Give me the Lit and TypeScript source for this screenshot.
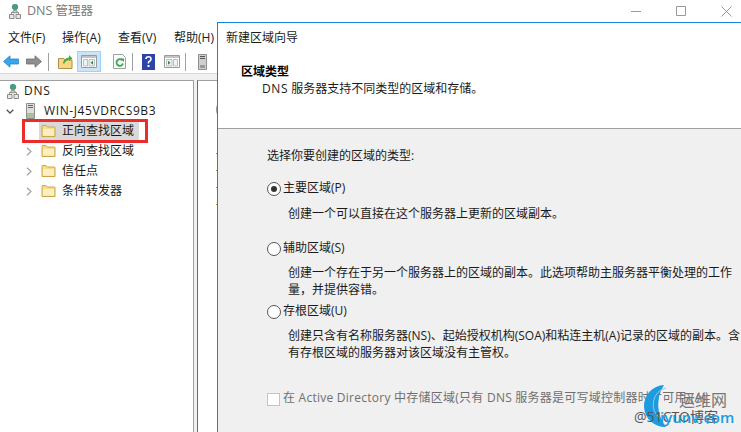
import { LitElement, html, css, svg } from "lit";
import { customElement } from "lit/decorators.js";

const folder = html`<svg class="folder" width="15" height="14" viewBox="0 0 15 14"><path d="M1 3.5V2.2Q1 1.5 1.7 1.5H5L6.5 3H13.5Q14 3 14 3.6V12.5H1Z" fill="#f8dc8c" stroke="#c9a64e"/><path d="M2 5H13V11.6H2Z" fill="#fdf0c0"/></svg>`;
const serverIcon = html`<svg width="9" height="16" viewBox="0 0 9 16"><path d="M.5 .5H8.500V15.500H.5Z" fill="#dcdcdc" stroke="#8f8f8f"/><path d="M2 2.500H7M2 4.500H7" stroke="#6a6a6a"/><path d="M1 10H8V15H1Z" fill="#a9bf9c"/></svg>`;
const dnsIcon = html`<svg width="12" height="15" viewBox="0 0 12 15"><circle cx="6" cy="3" r="2.800" fill="#49a35a" stroke="#3f84bb" stroke-width=".8"/><path d="M6 6V8.500M2.500 10V8.500H9.500V10" fill="none" stroke="#8c8c8c"/><path d="M4 6.800H8V8.800H4ZM.5 10.500H5V14.500H.5ZM7 10.500H11.500V14.500H7Z" fill="#e8e8e8" stroke="#8c8c8c"/></svg>`;

const panelIcon = (dir: string) => svg`<svg width="16" height="13" viewBox="0 0 16 13"><path d="M.5 .5H15.500V12.500H.5Z" fill="#fff" stroke="#9a9a9a"/><path d="M1 1H15V3H1Z" fill="#c4c4c4"/>${dir === "l"
    ? svg`<path d="M2.500 4.500H6.500V11H2.500ZM8 4.500H13.500V11H8Z" fill="#eef3f5" stroke="#a6a6a6" stroke-width=".7"/><path d="M12 5.800V9.800L9.500 7.800Z" fill="#2c8f3a"/>`
    : svg`<path d="M2.500 4.500H8V11H2.500ZM9.500 4.500H13.500V11H9.500Z" fill="#eef3f5" stroke="#a6a6a6" stroke-width=".7"/><path d="M4 5.800V9.800L6.500 7.800Z" fill="#2c8f3a"/>`}</svg>`;

@customElement("app-root")
export class AppRoot extends LitElement {
  static styles = css`
    :host { display: block; position: relative; width: 741px; height: 432px; overflow: hidden; background: #fff;
      font: 12px/16px "Open Sans", "Noto Sans CJK SC", sans-serif; color: #1a1a1a; }
    svg { display: block; flex: none; }
    .titlebar { height: 22px; display: flex; align-items: center; gap: 6px; padding: 0 0 0 9px; box-sizing: border-box; color: #7a7a7a; font-size: 12.5px; }
    .controls { margin-left: auto; display: flex; align-items: center; gap: 35px; padding-right: 9px; }
    .menu { height: 28px; display: flex; align-items: center; padding: 4px 0 0 8px; box-sizing: border-box; }
    .menu span { width: 56px; flex: none; }
    .menu span:first-child { width: 54px; }
    .toolbar { height: 23px; display: flex; align-items: center; padding-left: 3px; box-sizing: border-box; }
    .sep { width: 1px; height: 18px; background: #a0a0a0; margin: 0 9px 0 6px; flex: none; }
    .sep.s2 { margin: 0 9px 0 6px; }
    .sep.s3 { margin: 0 12px 0 5px; }
    .sp { width: 9px; flex: none; }
    .sel { width: 24px; height: 21px; background: #cce4f7; border: 1px solid #99d1ff; box-sizing: border-box; display: flex; align-items: center; justify-content: center; margin: 0 12px 0 4px; }
    .fwd { margin-left: 7px; }
    .gap { height: 7px; background: #f0f0f0; border-top: 1px solid #d8d8d8; box-sizing: border-box; }
    .panes { display: flex; height: 352px; }
    .tree { width: 193px; border-right: 1px solid #a0a0a0; border-top: 1px solid #a0a0a0; flex: none; }
    .splitter { width: 3px; background: #f0f0f0; flex: none; }
    .result { flex: 1; border-left: 1px solid #696969; border-top: 1px solid #a0a0a0; position: relative; }
    .row { height: 20px; display: flex; align-items: center; }
    .root { padding-left: 7px; gap: 5px; letter-spacing: .7px; }
    .host { padding-left: 6px; letter-spacing: .6px; }
    .host .srv { margin: 0 9px 0 12px; }
    .zone { padding-left: 26px; }
    .zone .label { margin-left: 6px; }
    .zone svg.folder { margin-left: 8px; }
    .zone.current { position: relative; }
    .zone.current::before { content: ""; position: absolute; left: 39px; width: 100px; height: 18px; background: #d9d9d9; }
    .zone > * { position: relative; }
    .nochev { width: 7px; flex: none; }
    .redbox { position: absolute; left: 22px; top: 119px; width: 126px; height: 24px; border: 3px solid #ec2b2b; box-sizing: border-box; }
    .arc { position: absolute; left: 18px; top: 22px; width: 4px; height: 13px; border-left: 2px solid #9a9a9a; border-radius: 50%; }
    .tick { position: absolute; left: 18px; width: 2px; height: 1px; background: #b5824f; }
    .dialog { position: absolute; left: 217px; top: 22px; width: 560px; height: 420px; border-left: 1px solid #1883d7; border-top: 1px solid #1883d7; background: #fff; box-sizing: border-box; }
    .d-title { height: 28px; padding: 7px 0 0 8px; box-sizing: border-box; }
    .d-head { height: 78px; padding: 12px 0 0 23px; box-sizing: border-box; border-bottom: 1px solid #a0a0a0; }
    .d-head b { display: block; font-weight: 700; line-height: 17px; color: #000; }
    .d-head p { margin: 0 0 0 21px; line-height: 17px; }
    .lat { letter-spacing: .6px; }
    .body { background: #f0f0f0; height: 320px; padding: 19px 0 0 49px; box-sizing: border-box; white-space: nowrap; }
    .ask { height: 16px; margin-bottom: 16px; }
    .opt { display: flex; align-items: center; gap: 2px; height: 16px; }
    .radio { width: 14px; height: 14px; border-radius: 50%; border: 1px solid #555; background: #fff; box-sizing: border-box; display: flex; align-items: center; justify-content: center; flex: none; margin-top: 2px; }
    .radio i { width: 6px; height: 6px; border-radius: 50%; background: #333; }
    .desc { margin: 0 0 0 21px; line-height: 17px; }
    .o1 { margin-bottom: 9px; } .d1 { margin-bottom: 18px; }
    .o2 { margin-bottom: 8px; } .d2 { margin-bottom: 5px; }
    .o3 { margin-bottom: 8px; } .d3 { margin-bottom: 29px; }
    .check { width: 13px; height: 13px; border: 1px solid #c4c4c4; background: #fff; box-sizing: border-box; flex: none; margin-top: 2px; }
    .ad { color: #6f6f6f; gap: 3px; letter-spacing: .25px; }
    .mark { position: absolute; left: 634px; top: 383px; width: 107px; height: 49px; }
    .mark svg { position: absolute; left: 6px; top: 0; }
    .m1 { position: absolute; left: 45px; top: 7px; font-size: 16px; line-height: 20px; color: #767676; }
    .m2 { position: absolute; left: 0; top: 25px; font-size: 14px; line-height: 18px; color: #555; white-space: nowrap; }
    .m3 { position: absolute; left: 26px; top: 24px; font-size: 15px; line-height: 20px; font-weight: 600; color: #1d9be0; }
  `;

  render() {
    return html`
      <div class="titlebar">
        ${dnsIcon}
        <span>DNS 管理器</span>
        <div class="controls">
          <svg width="10" height="10" viewBox="0 0 10 10"><path d="M0 5.500H10" stroke="#999"/></svg>
          <svg width="10" height="10" viewBox="0 0 10 10"><path d="M.5 .5H9.500V9.500H.5Z" fill="none" stroke="#999"/></svg>
          <svg width="11" height="11" viewBox="0 0 11 11"><path d="M.5 .5L10.500 10.500M10.500 .5L.5 10.500" stroke="#999"/></svg>
        </div>
      </div>
      <div class="menu"><span>文件(F)</span><span>操作(A)</span><span>查看(V)</span><span>帮助(H)</span></div>
      <div class="toolbar">
        <svg width="16" height="13" viewBox="0 0 16 13"><path d="M.5 6.500L7 .8V4H15.500V9H7V12.200Z" fill="#35a6ee" stroke="#2a86c4" stroke-width=".8"/></svg>
        <svg class="fwd" width="16" height="13" viewBox="0 0 16 13"><path d="M15.500 6.500L9 .8V4H.5V9H9V12.200Z" fill="#8e8e8e" stroke="#6f6f6f" stroke-width=".8"/></svg>
        <div class="sep"></div>
        <svg width="15" height="15" viewBox="0 0 15 15"><path d="M.5 4.500H6L7 6H14V14.500H.5Z" fill="#f5d886" stroke="#b4903c"/><path d="M5 9Q6 4 11 3.500V1L14.500 4.500L11 7V5.500Q8 6 6 10Z" fill="#4aa83c"/></svg>
        <div class="sel">${panelIcon("l")}</div>
        <svg width="13" height="15" viewBox="0 0 13 15"><path d="M.5 .5H9.500L12.500 3.500V14.500H.5Z" fill="#fafafa" stroke="#a0a0a0"/><path d="M9.500 6.500A3.300 3.300 0 1 0 10 9.500" fill="none" stroke="#3aa648" stroke-width="1.800"/><path d="M7.500 4.500H11V8Z" fill="#3aa648"/></svg>
        <div class="sep s2"></div>
        <svg width="13" height="16" viewBox="0 0 13 16"><path d="M0 0H13V16H0Z" fill="#2c43a8"/><path d="M4 5Q4 2.800 6.500 2.800T9 5Q9 6.500 7.500 7.300T6.500 9.500" fill="none" stroke="#fff" stroke-width="1.600"/><path d="M5.500 11H7.500V13H5.500Z" fill="#fff"/></svg>
        <div class="sp"></div>
        ${panelIcon("r")}
        <div class="sep s3"></div>
        <svg width="9" height="16" viewBox="0 0 9 16"><path d="M.5 .5H8.500V15.500H.5Z" fill="#cfcfcf" stroke="#8f8f8f"/><path d="M2 2.500H7M2 4.500H7" stroke="#555"/><path d="M2 11H7V14H2Z" fill="#9a9a9a"/></svg>
      </div>
      <div class="gap"></div>
      <div class="panes">
        <div class="tree">
          <div class="row root">${dnsIcon}<span>DNS</span></div>
          <div class="row host">
            <svg width="8" height="5" viewBox="0 0 8 5"><path d="M.7 .7L4 4L7.300 .7" fill="none" stroke="#555" stroke-width="1.300"/></svg>
            <span class="srv">${serverIcon}</span><span>WIN-J45VDRCS9B3</span>
          </div>
          <div class="row zone current"><span class="nochev"></span>${folder}<span class="label">正向查找区域</span></div>
          ${["反向查找区域", "信任点", "条件转发器"].map(
            (t) => html`<div class="row zone">
              <svg width="7" height="9" viewBox="0 0 7 9"><path d="M1 .7L5 4.500L1 8.300" fill="none" stroke="#a6a6a6" stroke-width="1.300"/></svg>
              ${folder}<span class="label">${t}</span></div>`
          )}
        </div>
        <div class="splitter"></div>
        <div class="result">
          <div class="arc"></div>
          ${[72, 89, 106, 123].map((y) => html`<div class="tick" style="top:${y}px"></div>`)}
        </div>
      </div>

      <div class="redbox"></div>

      <div class="dialog">
        <div class="d-title">新建区域向导</div>
        <div class="d-head"><b>区域类型</b><p><span class="lat">DNS</span> 服务器支持不同类型的区域和存储。</p></div>
        <div class="body">
          <div class="ask">选择你要创建的区域的类型:</div>
          <div class="opt o1"><span class="radio"><i></i></span>主要区域(P)</div>
          <p class="desc d1">创建一个可以直接在这个服务器上更新的区域副本。</p>
          <div class="opt o2"><span class="radio"></span>辅助区域(S)</div>
          <p class="desc d2">创建一个存在于另一个服务器上的区域的副本。此选项帮助主服务器平衡处理的工作<br />量，并提供容错。</p>
          <div class="opt o3"><span class="radio"></span>存根区域(U)</div>
          <p class="desc d3">创建只含有名称服务器(NS)、起始授权机构(SOA)和粘连主机(A)记录的区域的副本。含<br />有存根区域的服务器对该区域没有主管权。</p>
          <div class="opt ad"><span class="check"></span>在 Active Directory 中存储区域(只有 DNS 服务器是可写域控制器时才可用)(A)</div>
        </div>
      </div>

      <div class="mark">
        <svg width="44" height="46" viewBox="0 0 44 46"><path d="M24 2A21 21 0 0 0 26 44A36 36 0 0 1 24 2Z" fill="#1d9be0"/><path d="M26 5A17 17 0 0 0 20 35" fill="none" stroke="#8fc9ea" stroke-width="1"/></svg>
        <span class="m1">运维网</span>
        <span class="m2">@51CTO博客</span>
        <span class="m3">iyunv.com</span>
      </div>
    `;
  }
}
